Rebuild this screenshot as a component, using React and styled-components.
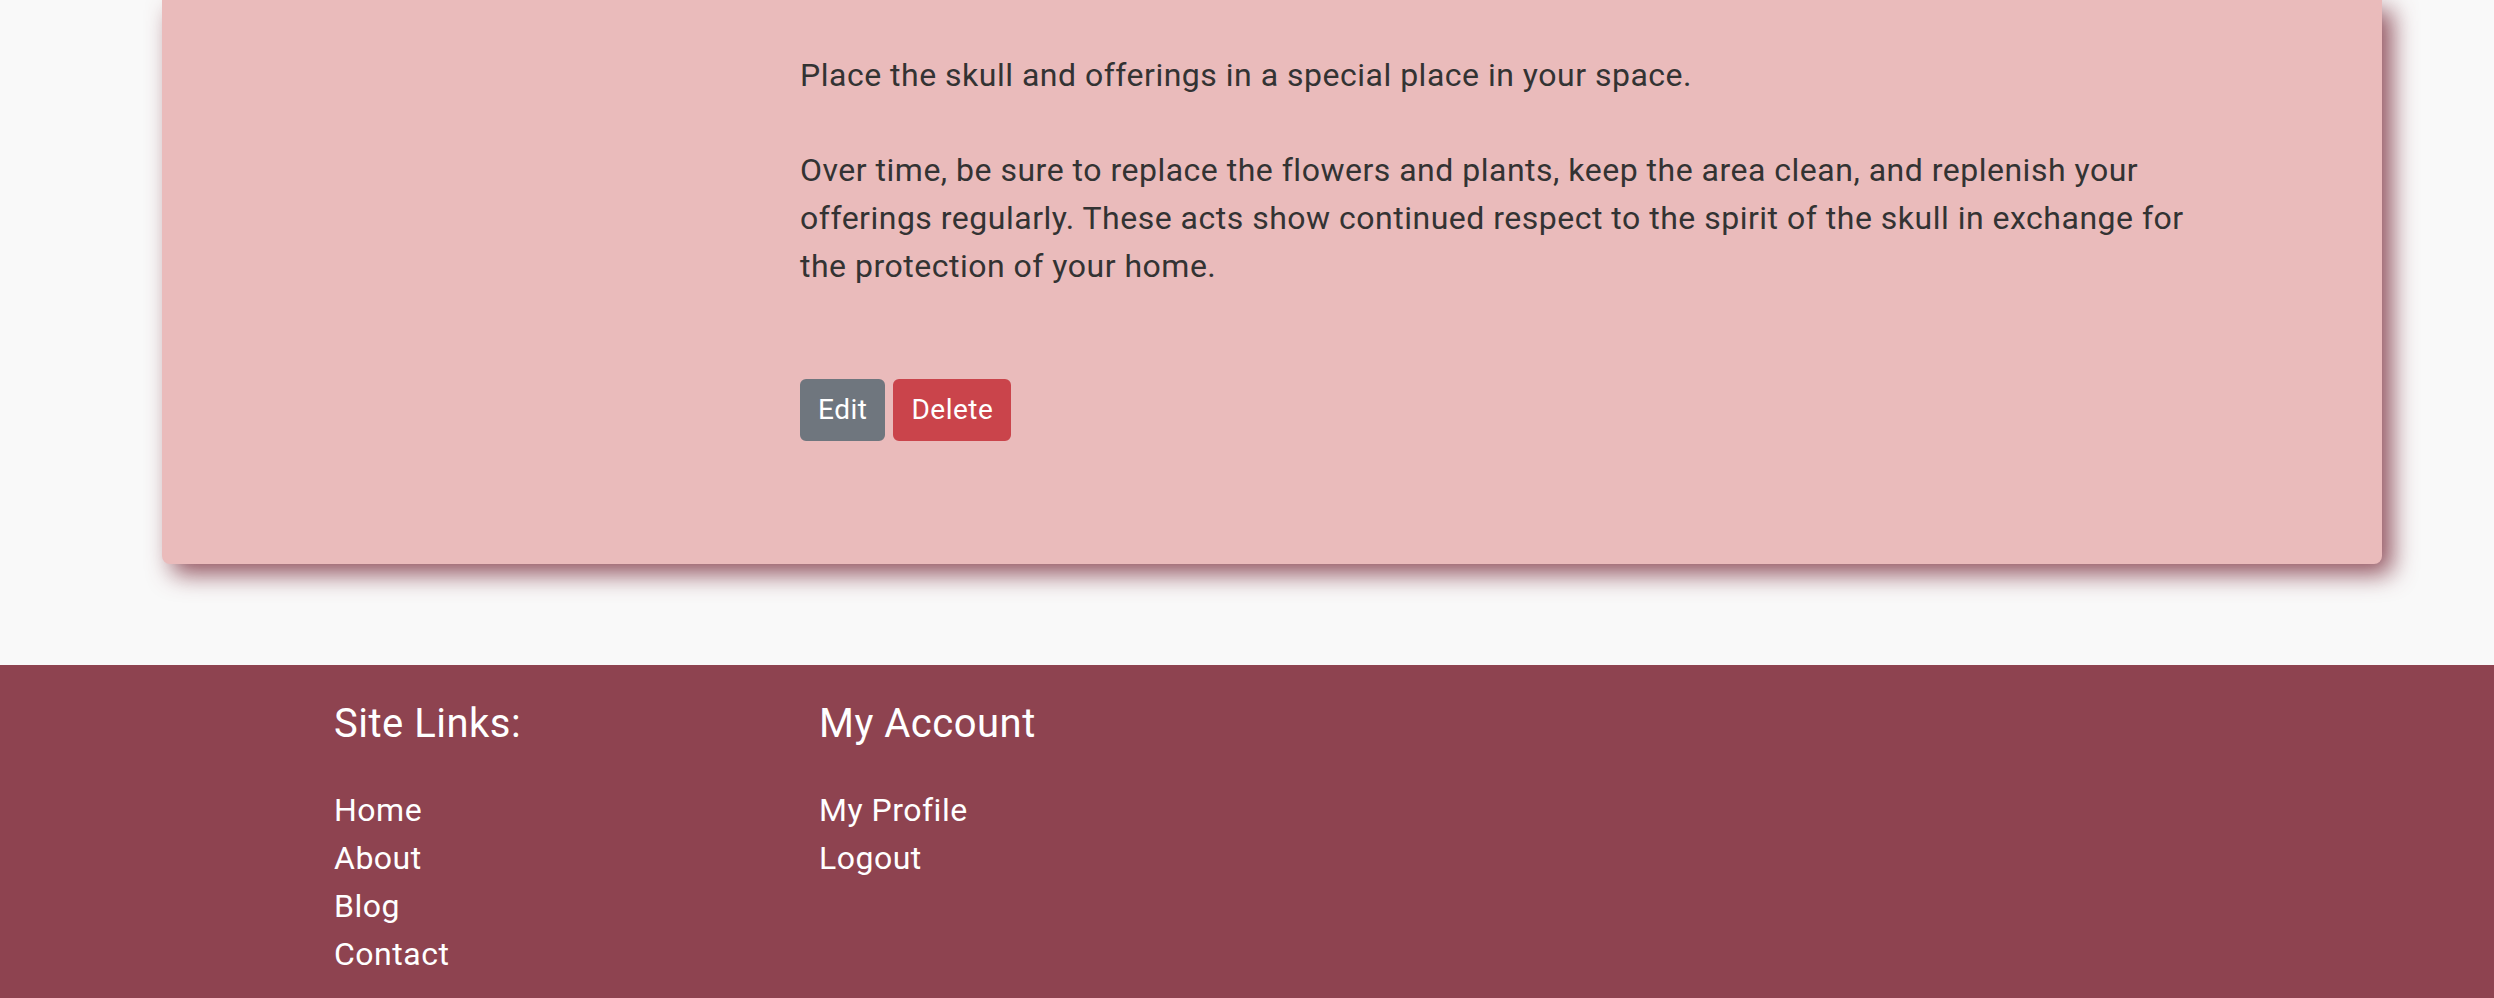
import React from 'react';
import styled, { createGlobalStyle } from 'styled-components';

const GlobalStyle = createGlobalStyle`
    body {
        margin: 0;
        background: #f9f9f9;
        font-family: 'Roboto', 'Liberation Sans', sans-serif;
        color: #333333;
        letter-spacing: 0.5px;
    }
`;

const Main = styled.main`
    padding: 0 0 101px 162px;
`;

const Card = styled.section`
    width: 2220px;
    box-sizing: border-box;
    display: grid;
    grid-template-columns: 638px 1fr;
    padding: 51px 156px 123px 0;
    background: #eabbbb;
    border-radius: 0 0 8px 8px;
    box-shadow: 10px 10px 24px rgba(120, 40, 55, 0.8);
`;

const Body = styled.div`
    font-size: 32px;
    line-height: 48px;
`;

const Para = styled.p`
    margin: 0 0 ${p => p.gap || 0}px;
`;

const Actions = styled.div`
    display: flex;
    gap: 8px;
`;

const Button = styled.button`
    font-family: inherit;
    letter-spacing: 0.5px;
    font-size: 28px;
    line-height: 42px;
    padding: 8px 16px;
    border: 2px solid ${p => p.bg};
    border-radius: 6px;
    background: ${p => p.bg};
    color: #ffffff;
    cursor: pointer;
`;

const Footer = styled.footer`
    background: #8e4350;
    color: #ffffff;
    min-height: 333px;
    padding: 35px 0 24px 334px;
    box-sizing: border-box;
    display: grid;
    grid-template-columns: 485px 485px;
`;

const Heading = styled.h5`
    margin: 0 0 38px;
    font-size: 40px;
    line-height: 48px;
    font-weight: 400;
`;

const LinkList = styled.ul`
    list-style: none;
    margin: 0;
    padding: 0;
`;

const FooterLink = styled.a`
    display: block;
    color: #ffffff;
    text-decoration: none;
    font-size: 32px;
    line-height: 48px;
`;

const siteLinks = ['Home', 'About', 'Blog', 'Contact'];
const accountLinks = ['My Profile', 'Logout'];

const App = () => {
    return (
        <>
            <GlobalStyle />
            <Main>
                <Card>
                    <div />
                    <Body>
                        <Para gap={47}>Place the skull and offerings in a special place in your space.</Para>
                        <Para gap={89}>
                            Over time, be sure to replace the flowers and plants, keep the area clean, and replenish your
                            offerings regularly. These acts show continued respect to the spirit of the skull in exchange for
                            the protection of your home.
                        </Para>
                        <Actions>
                            <Button bg="#6f767e">Edit</Button>
                            <Button bg="#ca444b">Delete</Button>
                        </Actions>
                    </Body>
                </Card>
            </Main>
            <Footer>
                <div>
                    <Heading>Site Links:</Heading>
                    <LinkList>
                        {siteLinks.map(l => <li key={l}><FooterLink href="#">{l}</FooterLink></li>)}
                    </LinkList>
                </div>
                <div>
                    <Heading>My Account</Heading>
                    <LinkList>
                        {accountLinks.map(l => <li key={l}><FooterLink href="#">{l}</FooterLink></li>)}
                    </LinkList>
                </div>
            </Footer>
        </>
    );
};

export default App;
